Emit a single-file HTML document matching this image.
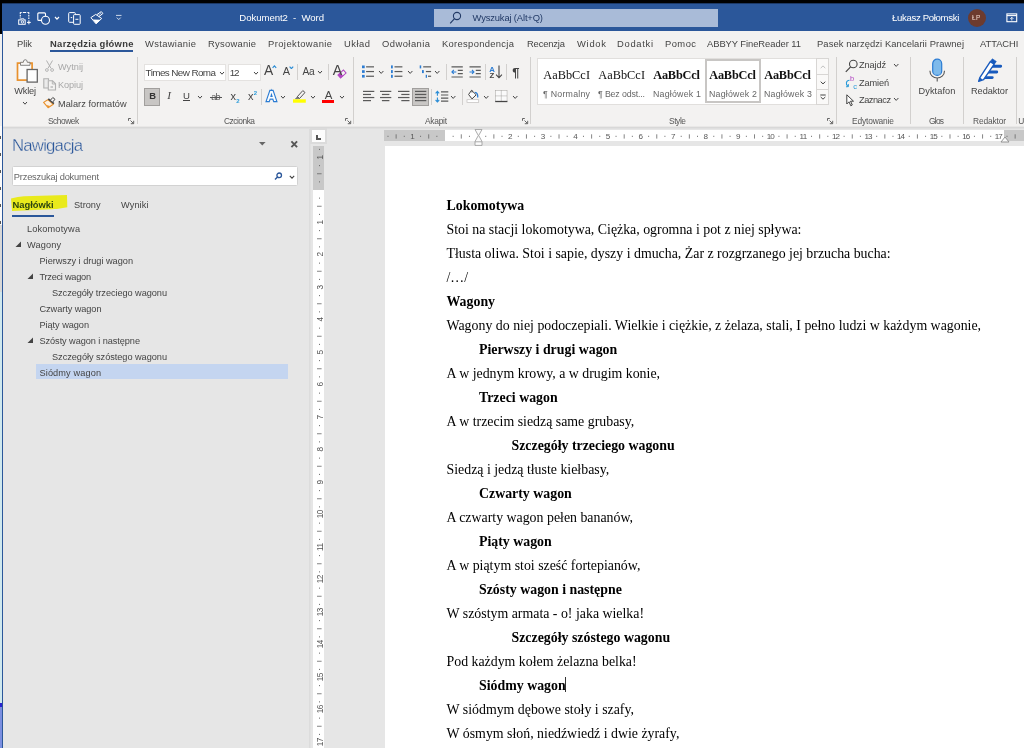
<!DOCTYPE html><html><head><meta charset="utf-8"><title>Dokument2 - Word</title><style>
html,body{margin:0;padding:0}body{width:1024px;height:748px;overflow:hidden;position:relative;background:#e6e6e6;font-family:"Liberation Sans", sans-serif}
#r{position:absolute;left:0;top:0;width:1024px;height:748px;overflow:hidden;will-change:transform;transform:translateZ(0)}
#r div,#r svg,#r span{position:absolute;display:block}
#r span{white-space:pre;line-height:1}
.s{font-family:"Liberation Serif", serif}.b{font-weight:bold}
</style></head><body><div id="r">
<div style="left:0px;top:0px;width:1024px;height:3px;background:#000;"></div>
<div style="left:0px;top:3px;width:2px;height:31px;background:#000;"></div>
<div style="left:0px;top:34px;width:2px;height:92px;background:#f0f0f0;"></div>
<div style="left:0px;top:126px;width:2px;height:99px;background:#fbfbfb;"></div>
<div style="left:0px;top:136px;width:1px;height:3px;background:#555;"></div>
<div style="left:0px;top:153px;width:1px;height:3px;background:#555;"></div>
<div style="left:0px;top:170px;width:1px;height:3px;background:#555;"></div>
<div style="left:0px;top:187px;width:1px;height:3px;background:#555;"></div>
<div style="left:0px;top:204px;width:1px;height:3px;background:#555;"></div>
<div style="left:0px;top:221px;width:1px;height:3px;background:#555;"></div>
<div style="left:0px;top:225px;width:2px;height:67px;background:#d8d8d8;"></div>
<div style="left:0px;top:292px;width:2px;height:411px;background:#cfe8ee;"></div>
<div style="left:0px;top:703px;width:2px;height:4px;background:#2a22d0;"></div>
<div style="left:0px;top:707px;width:2px;height:41px;background:#7b8fe0;"></div>
<div style="left:2px;top:3px;width:1022px;height:28px;background:#2b579a;"></div>
<div style="left:2px;top:3px;width:1022px;height:1px;background:#1c3865;"></div>
<div style="left:2px;top:31px;width:1px;height:717px;background:#2b579a;"></div>
<div style="left:3px;top:31px;width:1021px;height:95.5px;background:#f3f2f1;"></div>
<div style="left:3px;top:126px;width:1021px;height:1px;background:#e9e8e7;"></div>
<div style="left:3px;top:127px;width:1021px;height:1px;background:#d8d8d8;"></div>
<div style="left:3px;top:128px;width:1021px;height:1px;background:#dfdfdf;"></div>
<div style="left:434px;top:9px;width:284px;height:18px;background:#a9bbd8;"></div>
<div style="left:50px;top:50px;width:83px;height:2px;background:#2b579a;"></div>
<div style="left:309px;top:129px;width:1px;height:619px;background:#dcdcdc;"></div>
<div style="left:310px;top:129px;width:1px;height:619px;background:#e1e1e1;"></div>
<div style="left:12px;top:166px;width:286px;height:20px;background:#fff;border:1px solid #d2d2d2;box-sizing:border-box;border-radius:1.5px"></div>
<div style="left:12px;top:215px;width:42.3px;height:2px;background:#2b579a;"></div>
<div style="left:36px;top:364px;width:251.5px;height:15px;background:#c4d5f0;"></div>
<div style="left:385px;top:146px;width:639px;height:602px;background:#fff;"></div>
<div style="left:384px;top:130px;width:61px;height:11px;background:#c8c8c8;"></div>
<div style="left:445px;top:130px;width:559px;height:11px;background:#fff;"></div>
<div style="left:1004px;top:130px;width:20px;height:11px;background:#c8c8c8;"></div>
<div style="left:310px;top:128px;width:17px;height:16px;background:#fcfcfc;border:2px solid #dbdbdb;box-sizing:border-box"></div>
<div style="left:313px;top:146px;width:11px;height:44px;background:#c8c8c8;"></div>
<div style="left:313px;top:190px;width:11px;height:558px;background:#fff;"></div>
<div style="left:137px;top:57px;width:1px;height:67px;background:#d2d0ce;"></div>
<div style="left:353px;top:57px;width:1px;height:67px;background:#d2d0ce;"></div>
<div style="left:530px;top:57px;width:1px;height:67px;background:#d2d0ce;"></div>
<div style="left:836px;top:57px;width:1px;height:67px;background:#d2d0ce;"></div>
<div style="left:910px;top:57px;width:1px;height:67px;background:#d2d0ce;"></div>
<div style="left:963px;top:57px;width:1px;height:67px;background:#d2d0ce;"></div>
<div style="left:1016px;top:57px;width:1px;height:67px;background:#d2d0ce;"></div>
<div style="left:144px;top:63.5px;width:82.3px;height:17px;background:#fff;border:1px solid #e4e2e0;box-sizing:border-box"></div>
<div style="left:227.5px;top:63.5px;width:33px;height:17px;background:#fff;border:1px solid #e4e2e0;box-sizing:border-box"></div>
<div style="left:297px;top:64px;width:1px;height:16px;background:#d2d0ce;"></div>
<div style="left:328px;top:64px;width:1px;height:16px;background:#d2d0ce;"></div>
<div style="left:144px;top:88px;width:16px;height:18px;background:#c8c6c4;border:1px solid #a19f9d;box-sizing:border-box"></div>
<div style="left:183px;top:100px;width:7.3px;height:1px;background:#444;"></div>
<div style="left:209.5px;top:97px;width:12.5px;height:1px;background:#555;"></div>
<div style="left:261px;top:89px;width:1px;height:16px;background:#d2d0ce;"></div>
<div style="left:322px;top:99.5px;width:12.3px;height:3.2px;background:#ff0000;"></div>
<div style="left:446px;top:64px;width:1px;height:16px;background:#d2d0ce;"></div>
<div style="left:485px;top:64px;width:1px;height:16px;background:#d2d0ce;"></div>
<div style="left:506px;top:64px;width:1px;height:16px;background:#d2d0ce;"></div>
<div style="left:412px;top:88px;width:17px;height:18px;background:#c8c6c4;border:1px solid #a19f9d;box-sizing:border-box"></div>
<div style="left:431px;top:89px;width:1px;height:16px;background:#d2d0ce;"></div>
<div style="left:462px;top:89px;width:1px;height:16px;background:#d2d0ce;"></div>
<div style="left:537px;top:58px;width:292px;height:47px;background:#fff;border:1px solid #e1dfdd;box-sizing:border-box"></div>
<div style="left:816px;top:58px;width:13px;height:47px;background:#faf9f8;border:1px solid #d8d6d4;box-sizing:border-box"></div>
<div style="left:816px;top:74px;width:13px;height:1px;background:#d8d6d4;"></div>
<div style="left:816px;top:89px;width:13px;height:1px;background:#d8d6d4;"></div>
<div style="left:705px;top:59px;width:56px;height:44px;background:#fff;border:2px solid #c8c6c4;box-sizing:border-box"></div>
<div style="left:968px;top:8.5px;width:18px;height:18px;background:#6d3b2e;border-radius:50%"></div>
<div style="left:565px;top:677px;width:1px;height:15px;background:#333;"></div>
<svg style="left:259px;top:142px;" width="7" height="4" viewBox="0 0 7 4"><path d="M0 0h6.600L3.300 3.600z" fill="#666"/></svg>
<svg style="left:289.5px;top:139.5px;" width="9" height="9" viewBox="0 0 9 9"><path d="M1.400 1.400l5.700 5.700M7.100 1.400l-5.700 5.700" stroke="#555" stroke-width="1.900" fill="none"/></svg>
<svg style="left:273.5px;top:171.5px;" width="9" height="9" viewBox="0 0 9 9"><circle cx="5.200" cy="3.300" r="2.300" fill="none" stroke="#2b579a" stroke-width="1.300"/><path d="M3.500 5L1 7.500" stroke="#2b579a" stroke-width="1.500"/></svg>
<svg style="left:288.5px;top:174.5px;" width="7" height="5" viewBox="0 0 7 5"><path d="M0.800 0.800L3 3.100L5.200 0.800" fill="none" stroke="#444" stroke-width="1.100"/></svg>
<svg style="left:10px;top:194px;" width="59" height="18" viewBox="0 0 59 18"><path d="M1 4.600Q8 2.600 14 2.200L57 1L57.300 13.300Q50 14.600 42 15.200L2 17z" fill="#e9ea1c"/></svg>
<svg style="left:14.5px;top:240.8px;" width="7" height="7" viewBox="0 0 7 7"><path d="M6 0.5V6H0.5z" fill="#444"/></svg>
<svg style="left:27.0px;top:272.8px;" width="7" height="7" viewBox="0 0 7 7"><path d="M6 0.5V6H0.5z" fill="#444"/></svg>
<svg style="left:27.0px;top:336.8px;" width="7" height="7" viewBox="0 0 7 7"><path d="M6 0.5V6H0.5z" fill="#444"/></svg>
<svg style="left:316px;top:135px;" width="6" height="6" viewBox="0 0 6 6"><path d="M1 0V4H5" fill="none" stroke="#555" stroke-width="2"/></svg>
<svg style="left:15px;top:58px;" width="24" height="26" viewBox="0 0 24 26">
<rect x="2.5" y="5.1" width="14.6" height="17" fill="#fafafa" stroke="#e8912d" stroke-width="1.7"/>
<path d="M5.5 7.3V4.300H8.300A2 2.6 0 0 1 12.300 4.300H15V7.3z" fill="#f6f5f4" stroke="#777" stroke-width="0.9"/>
<rect x="12.100" y="11.500" width="10.200" height="12.600" fill="#fdfdfd" stroke="#666" stroke-width="1.3"/>
</svg>
<svg style="left:21.85px;top:100.7px;" width="6" height="4.2" viewBox="0 0 6 4.2"><path d="M1 1L3.0 3.2L5 1" fill="none" stroke="#444" stroke-width="1"/></svg>
<svg style="left:45px;top:60px;" width="9" height="12.5" viewBox="0 0 9 12.5"><path d="M1.500 0.5L6 8.300M7.5 0.5L3 8.300" stroke="#b0b0b0" stroke-width="1" fill="none"/><circle cx="1.900" cy="10" r="1.400" fill="none" stroke="#b0b0b0" stroke-width="0.9"/><circle cx="7.100" cy="10" r="1.400" fill="none" stroke="#b0b0b0" stroke-width="0.9"/></svg>
<svg style="left:43px;top:78px;" width="14" height="13" viewBox="0 0 14 13"><path d="M5 10H0.800V0.800H5.500V2.500" fill="#ebebeb" stroke="#b0b0b0" stroke-width="1.1"/><path d="M5.300 2.800H9.500L12.500 5.800V12H5.300z" fill="#f3f2f1" stroke="#b0b0b0" stroke-width="1.1"/><path d="M9.300 2.800V6H12.500" fill="none" stroke="#b0b0b0" stroke-width="0.9"/><rect x="7.500" y="8" width="2.500" height="2" fill="#c8c8c8"/></svg>
<svg style="left:43px;top:96px;" width="14" height="13" viewBox="0 0 14 13"><path d="M0.600 6.400L4.800 3.700L10.300 8.300L5.100 11.700z" fill="#fdf1e3" stroke="#e8912d" stroke-width="1.1" stroke-linejoin="round"/><path d="M3.300 9L5.100 11.500L7 9.900z" fill="#e8912d"/><path d="M5.300 2.900L10.900 7.600" stroke="#444" stroke-width="1.500"/><path d="M7.300 4.300L9.800 1.500L12 3.300L9.500 6.200z" fill="#f3f2f1" stroke="#444" stroke-width="1"/></svg>
<svg style="left:128.1px;top:117.8px;" width="7" height="7" viewBox="0 0 7 7"><path d="M0.5 2.800V0.5H2.800M2.500 2.500L5.300 5.300M5.700 2.800V5.700H2.800" fill="none" stroke="#555" stroke-width="0.9"/></svg>
<svg style="left:218.9px;top:70.7px;" width="6" height="4.2" viewBox="0 0 6 4.2"><path d="M1 1L3.0 3.2L5 1" fill="none" stroke="#444" stroke-width="1"/></svg>
<svg style="left:252.75px;top:70.7px;" width="6" height="4.2" viewBox="0 0 6 4.2"><path d="M1 1L3.0 3.2L5 1" fill="none" stroke="#444" stroke-width="1"/></svg>
<svg style="left:271.7px;top:65.3px;" width="5" height="3.5" viewBox="0 0 5 3.5"><path d="M0.6 2.800L2.4 0.900L4.200 2.800" fill="none" stroke="#2b8dd6" stroke-width="1.2"/></svg>
<svg style="left:288.8px;top:65.6px;" width="5" height="3.5" viewBox="0 0 5 3.5"><path d="M0.6 0.700L2.4 2.600L4.200 0.700" fill="none" stroke="#2b8dd6" stroke-width="1.2"/></svg>
<svg style="left:316.8px;top:70.4px;" width="6" height="4.2" viewBox="0 0 6 4.2"><path d="M1 1L3.0 3.2L5 1" fill="none" stroke="#444" stroke-width="1"/></svg>
<svg style="left:337px;top:69px;" width="10" height="10" viewBox="0 0 10 10"><g transform="rotate(-42 5 5)"><rect x="1.300" y="3" width="7.400" height="4" fill="#f3f2f1" stroke="#b146c2" stroke-width="1"/><rect x="1.300" y="3" width="3.400" height="4" fill="#b146c2"/></g></svg>
<svg style="left:197.3px;top:95.30000000000001px;" width="6" height="4.2" viewBox="0 0 6 4.2"><path d="M1 1L3.0 3.2L5 1" fill="none" stroke="#444" stroke-width="1"/></svg>
<svg style="left:280.1px;top:95.2px;" width="6" height="4.2" viewBox="0 0 6 4.2"><path d="M1 1L3.0 3.2L5 1" fill="none" stroke="#444" stroke-width="1"/></svg>
<svg style="left:293px;top:88px;" width="14" height="16" viewBox="0 0 14 16"><path d="M4.300 8.700L9.800 2.600L12 4.500L6.500 10.500z" fill="#f3f2f1" stroke="#444" stroke-width="0.9"/><path d="M4.300 8.700L2.300 11L6.500 10.500z" fill="#6a6a6a" stroke="#6a6a6a" stroke-width="0.5"/><rect x="0" y="11.300" width="12.800" height="3.400" fill="#ffff00"/></svg>
<svg style="left:309.9px;top:95.2px;" width="6" height="4.2" viewBox="0 0 6 4.2"><path d="M1 1L3.0 3.2L5 1" fill="none" stroke="#444" stroke-width="1"/></svg>
<svg style="left:338.5px;top:95.2px;" width="6" height="4.2" viewBox="0 0 6 4.2"><path d="M1 1L3.0 3.2L5 1" fill="none" stroke="#444" stroke-width="1"/></svg>
<svg style="left:344.5px;top:117.8px;" width="7" height="7" viewBox="0 0 7 7"><path d="M0.5 2.800V0.5H2.800M2.500 2.500L5.300 5.300M5.700 2.800V5.700H2.800" fill="none" stroke="#555" stroke-width="0.9"/></svg>
<svg style="left:361px;top:65px;" width="14" height="14" viewBox="0 0 14 14"><rect x="1" y="0.5" width="2.700" height="2.700" fill="#2b7cd3"/><path d="M5.100 1.85h7.900" stroke="#5a5a5a" stroke-width="1.2"/><rect x="1" y="5.2" width="2.700" height="2.700" fill="#2b7cd3"/><path d="M5.100 6.550000000000001h7.900" stroke="#5a5a5a" stroke-width="1.2"/><rect x="1" y="9.9" width="2.700" height="2.700" fill="#2b7cd3"/><path d="M5.100 11.25h7.900" stroke="#5a5a5a" stroke-width="1.2"/></svg>
<svg style="left:378.40000000000003px;top:70.3px;" width="6.4" height="4.4" viewBox="0 0 6.4 4.4"><path d="M1 1L3.2 3.4L5.4 1" fill="none" stroke="#444" stroke-width="1"/></svg>
<svg style="left:390px;top:65px;" width="14" height="14" viewBox="0 0 14 14"><rect x="1" y="0.4" width="1.800" height="3" fill="#2b7cd3"/><path d="M4.500 1.85h7.900" stroke="#5a5a5a" stroke-width="1.2"/><rect x="1" y="5.1000000000000005" width="1.800" height="3" fill="#2b7cd3"/><path d="M4.500 6.550000000000001h7.900" stroke="#5a5a5a" stroke-width="1.2"/><rect x="1" y="9.8" width="1.800" height="3" fill="#2b7cd3"/><path d="M4.500 11.25h7.900" stroke="#5a5a5a" stroke-width="1.2"/></svg>
<svg style="left:407.3px;top:70.3px;" width="6.4" height="4.4" viewBox="0 0 6.4 4.4"><path d="M1 1L3.2 3.4L5.4 1" fill="none" stroke="#444" stroke-width="1"/></svg>
<svg style="left:418px;top:65px;" width="14" height="14" viewBox="0 0 14 14"><rect x="1.700" y="0.400" width="1.500" height="3" fill="#2b7cd3"/><path d="M5.200 1.850h7.900" stroke="#5a5a5a" stroke-width="1.2"/><rect x="4" y="5.100" width="1.800" height="3" fill="#2b7cd3"/><path d="M7.900 6.550h5.200" stroke="#5a5a5a" stroke-width="1.2"/><rect x="7.700" y="9.800" width="1.300" height="3" fill="#2b7cd3"/><path d="M10 11.250h3.100" stroke="#5a5a5a" stroke-width="1.2"/></svg>
<svg style="left:433.90000000000003px;top:70.3px;" width="6.4" height="4.4" viewBox="0 0 6.4 4.4"><path d="M1 1L3.2 3.4L5.4 1" fill="none" stroke="#444" stroke-width="1"/></svg>
<svg style="left:451px;top:65px;" width="13" height="14" viewBox="0 0 13 14"><path d="M0.500 1.900h11.300M6.800 5.300h5M6.800 8.600h5M0.500 12h11.300" stroke="#5a5a5a" stroke-width="1.2"/><path d="M5.300 6.950H0.900M2.800 5L0.900 6.950L2.800 8.900" fill="none" stroke="#2b7cd3" stroke-width="1.1"/></svg>
<svg style="left:468.5px;top:65px;" width="13" height="14" viewBox="0 0 13 14"><path d="M0.500 1.900h11.300M6.800 5.300h5M6.800 8.600h5M0.500 12h11.300" stroke="#5a5a5a" stroke-width="1.2"/><path d="M0.500 6.950H4.900M3 5L4.900 6.950L3 8.900" fill="none" stroke="#2b7cd3" stroke-width="1.1"/></svg>
<svg style="left:495.2px;top:64.5px;" width="8" height="14" viewBox="0 0 8 14"><path d="M4 0.500V12.500M1.100 9.700L4 12.800L6.900 9.700" fill="none" stroke="#444" stroke-width="1.1"/></svg>
<svg style="left:362.5px;top:90px;" width="13" height="14" viewBox="0 0 13 14"><path d="M0 1.4h11.3" stroke="#5a5a5a" stroke-width="1.2"/><path d="M0 4.47h8" stroke="#5a5a5a" stroke-width="1.2"/><path d="M0 7.539999999999999h11.3" stroke="#5a5a5a" stroke-width="1.2"/><path d="M0 10.61h8" stroke="#5a5a5a" stroke-width="1.2"/></svg>
<svg style="left:379.8px;top:90px;" width="13" height="14" viewBox="0 0 13 14"><path d="M0 1.4h11.3" stroke="#5a5a5a" stroke-width="1.2"/><path d="M1.9 4.47h7.5" stroke="#5a5a5a" stroke-width="1.2"/><path d="M0 7.539999999999999h11.3" stroke="#5a5a5a" stroke-width="1.2"/><path d="M1.9 10.61h7.5" stroke="#5a5a5a" stroke-width="1.2"/></svg>
<svg style="left:397.5px;top:90px;" width="13" height="14" viewBox="0 0 13 14"><path d="M0 1.4h11.5" stroke="#5a5a5a" stroke-width="1.2"/><path d="M3.3 4.47h8.2" stroke="#5a5a5a" stroke-width="1.2"/><path d="M0 7.539999999999999h11.5" stroke="#5a5a5a" stroke-width="1.2"/><path d="M3.3 10.61h8.2" stroke="#5a5a5a" stroke-width="1.2"/></svg>
<svg style="left:415px;top:90px;" width="13" height="14" viewBox="0 0 13 14"><path d="M0 1.4h11.3" stroke="#5a5a5a" stroke-width="1.2"/><path d="M0 4.47h11.3" stroke="#5a5a5a" stroke-width="1.2"/><path d="M0 7.539999999999999h11.3" stroke="#5a5a5a" stroke-width="1.2"/><path d="M0 10.61h11.3" stroke="#5a5a5a" stroke-width="1.2"/></svg>
<svg style="left:435px;top:89.5px;" width="14" height="14" viewBox="0 0 14 14"><path d="M6 1.900h7.300M6 5h7.300M6 8.100h7.300M6 11.200h7.300" stroke="#5a5a5a" stroke-width="1.2"/><path d="M2.400 1.500V5.800M0.600 3.300L2.400 1.400L4.200 3.300M2.400 7.500V11.800M0.600 10L2.400 11.900L4.200 10" fill="none" stroke="#2b8dd6" stroke-width="1.1"/></svg>
<svg style="left:449.8px;top:95.1px;" width="6.4" height="4.4" viewBox="0 0 6.4 4.4"><path d="M1 1L3.2 3.4L5.4 1" fill="none" stroke="#444" stroke-width="1"/></svg>
<svg style="left:466px;top:89px;" width="14" height="15" viewBox="0 0 14 15"><path d="M5.500 1.300L10.200 5.800L6 9.900L2.600 5.500z" fill="#fdfdfd" stroke="#444" stroke-width="1" stroke-linejoin="round"/><path d="M6 1.200V3.500" stroke="#444" stroke-width="0.900"/><path d="M8.800 3.300C11.300 3.400 12 5.800 11.700 8.500" fill="none" stroke="#2b7cd3" stroke-width="1.300"/><rect x="1" y="10.700" width="11.700" height="2.900" fill="#fff" stroke="#c0beBC" stroke-width="0.7"/></svg>
<svg style="left:483.2px;top:95.1px;" width="6.4" height="4.4" viewBox="0 0 6.4 4.4"><path d="M1 1L3.2 3.4L5.4 1" fill="none" stroke="#444" stroke-width="1"/></svg>
<svg style="left:495px;top:90px;" width="13" height="13" viewBox="0 0 13 13"><rect x="0.500" y="0.500" width="11.600" height="10.800" fill="#fafafa"/><path d="M0.500 0.500h11.600M0.500 5.900h11.600M0.500 0.500v10.800M6.300 0.500v10.800M12.100 0.500v10.800" stroke="#9a9896" stroke-width="0.9" stroke-dasharray="1 1"/><path d="M0.200 11.500h12.200" stroke="#444" stroke-width="1.300"/></svg>
<svg style="left:511.9px;top:95.1px;" width="6.4" height="4.4" viewBox="0 0 6.4 4.4"><path d="M1 1L3.2 3.4L5.4 1" fill="none" stroke="#444" stroke-width="1"/></svg>
<svg style="left:521.7px;top:117.8px;" width="7" height="7" viewBox="0 0 7 7"><path d="M0.5 2.800V0.5H2.800M2.500 2.500L5.300 5.300M5.700 2.800V5.700H2.800" fill="none" stroke="#555" stroke-width="0.9"/></svg>
<svg style="left:819.5px;top:64.5px;" width="6" height="4" viewBox="0 0 6 4"><path d="M0.700 3.100L3 0.900L5.300 3.100" fill="none" stroke="#c0c0c0" stroke-width="1"/></svg>
<svg style="left:819.5px;top:80.5px;" width="6" height="4" viewBox="0 0 6 4"><path d="M0.700 0.700L3 2.900L5.300 0.700" fill="none" stroke="#444" stroke-width="1"/></svg>
<svg style="left:819.5px;top:93.5px;" width="6" height="7" viewBox="0 0 6 7"><path d="M0.300 1h5.400" stroke="#444" stroke-width="1"/><path d="M0.700 3L3 5.200L5.300 3" fill="none" stroke="#444" stroke-width="1"/></svg>
<svg style="left:827.2px;top:117.8px;" width="7" height="7" viewBox="0 0 7 7"><path d="M0.5 2.800V0.5H2.800M2.500 2.500L5.300 5.300M5.700 2.800V5.700H2.800" fill="none" stroke="#555" stroke-width="0.9"/></svg>
<svg style="left:844.5px;top:58.5px;" width="14" height="14" viewBox="0 0 14 14"><circle cx="8.300" cy="5" r="3.800" fill="none" stroke="#444" stroke-width="1.100"/><path d="M5.600 7.800L0.800 12.800" stroke="#444" stroke-width="1.200"/></svg>
<svg style="left:892.8px;top:62.8px;" width="6.4" height="4.4" viewBox="0 0 6.4 4.4"><path d="M1 1L3.2 3.4L5.4 1" fill="none" stroke="#444" stroke-width="1"/></svg>
<svg style="left:844.5px;top:78.5px;" width="8" height="10" viewBox="0 0 8 10"><path d="M4.500 1.200C1 1.200 0.300 5.500 3 7.200" fill="none" stroke="#2b9bd9" stroke-width="1.100"/><path d="M1 7.800L3.500 7.600L3.200 5" fill="none" stroke="#2b9bd9" stroke-width="1"/></svg>
<svg style="left:846px;top:93.5px;" width="9" height="13" viewBox="0 0 9 13"><path d="M0.800 0.800V10L3 7.800L4.800 11.800L6.300 11L4.500 7.200H7.500z" fill="#fff" stroke="#444" stroke-width="1"/></svg>
<svg style="left:893.3px;top:97.39999999999999px;" width="6.4" height="4.4" viewBox="0 0 6.4 4.4"><path d="M1 1L3.2 3.4L5.4 1" fill="none" stroke="#444" stroke-width="1"/></svg>
<svg style="left:928px;top:58px;" width="18" height="26" viewBox="0 0 18 26"><rect x="4.700" y="1.200" width="9" height="16.200" rx="4.500" fill="#7ebaeb" stroke="#2b7cd3" stroke-width="1.200"/><path d="M1.900 12.800C1.900 22.300 16.500 22.300 16.500 12.800M9.200 19.800v3.800" fill="none" stroke="#555" stroke-width="1.100"/></svg>
<svg style="left:977px;top:57px;" width="27" height="26" viewBox="0 0 27 26"><path d="M14 9.250h9.700M11 15h8.800M8 20.600h7.300" stroke="#185abd" stroke-width="2.800" stroke-linecap="round"/><path d="M1.700 24.300L3 20.300L13.300 4.600L17.200 7.200L6.600 22.700z" fill="#fff" stroke="#185abd" stroke-width="1.400" stroke-linejoin="round"/><path d="M1.700 24.300L2.900 20.600L5.600 22.500z" fill="#185abd"/><path d="M13.600 4.200L15.300 1.800L19.300 4.400L17.600 6.900z" fill="#185abd" stroke="#185abd" stroke-width="0.600" stroke-linejoin="round"/></svg>
<svg style="left:17px;top:11px;" width="15" height="15" viewBox="0 0 15 15"><path d="M3.300 1.200V7.500" fill="none" stroke="#fff" stroke-width="1.100" stroke-dasharray="1.700 0.900"/><path d="M3.300 1.500H4.700M5.800 1.500H9.200M10.400 1.500H11.800" stroke="#fff" stroke-width="1.100"/><path d="M11.800 1.200V9.200" fill="none" stroke="#fff" stroke-width="1.100" stroke-dasharray="1.700 0.900"/><rect x="1.700" y="8.900" width="6.500" height="4.400" fill="#2b579a" stroke="#fff" stroke-width="1"/><path d="M4.200 8.600V7.800H6.900V8.600" fill="#2b579a" stroke="#fff" stroke-width="0.900"/><circle cx="5.400" cy="11" r="1.200" fill="none" stroke="#fff" stroke-width="0.900"/><path d="M10 11.400h3.800M11.900 9.500v3.800" stroke="#fff" stroke-width="1"/></svg>
<svg style="left:36px;top:11px;" width="15" height="15" viewBox="0 0 15 15"><path d="M6 9.400H2.800a1 1 0 0 1-1-1V2.900a1 1 0 0 1 1-1H8.500a1 1 0 0 1 1 1V5.500" fill="none" stroke="#fff" stroke-width="1.100"/><circle cx="9.500" cy="9.300" r="4" fill="#2b579a" stroke="#fff" stroke-width="1.100"/></svg>
<svg style="left:54.1px;top:15.55px;" width="6" height="4.1" viewBox="0 0 6 4.1"><path d="M1 1L3.0 3.1L5 1" fill="none" stroke="#fff" stroke-width="1.2"/></svg>
<svg style="left:67px;top:11px;" width="15" height="15" viewBox="0 0 15 15"><rect x="1.700" y="1.600" width="6.600" height="9.700" rx="0.800" fill="none" stroke="#fff" stroke-width="1"/><rect x="6.600" y="3.600" width="6.600" height="9.700" rx="0.800" fill="#2b579a" stroke="#fff" stroke-width="1"/><path d="M3.700 6.600h1.500M8.400 8.300h3" stroke="#fff" stroke-width="1"/></svg>
<svg style="left:90px;top:11px;" width="15" height="14" viewBox="0 0 15 14"><path d="M0.900 6.600L5.750 3.400L11.700 7.500L6 12.800z" fill="none" stroke="#fff" stroke-width="1" stroke-linejoin="round"/><path d="M2.800 8.500L10.400 8.700L6 12.800z" fill="#fff"/><path d="M6.800 3.700L11.300 0.600L12.900 2.500L8.800 5.700" fill="none" stroke="#fff" stroke-width="1"/><path d="M8.500 2.800L10 4.600M10 1.700L11.500 3.500" stroke="#fff" stroke-width="0.600"/></svg>
<svg style="left:115px;top:14px;" width="8" height="8" viewBox="0 0 8 8"><path d="M1 1.400h5.500" stroke="#fff" stroke-width="0.900" opacity="0.85"/><path d="M1.800 3.600L3.750 5.600L5.700 3.600" fill="none" stroke="#fff" stroke-width="0.900" opacity="0.85"/></svg>
<svg style="left:449px;top:11px;" width="14" height="14" viewBox="0 0 14 14"><circle cx="8" cy="5" r="3.600" fill="none" stroke="#223a66" stroke-width="1.100"/><path d="M5.500 7.700L1.200 12.300" stroke="#223a66" stroke-width="1.200"/></svg>
<svg style="left:1006px;top:12.5px;" width="12" height="10" viewBox="0 0 12 10"><rect x="0.900" y="0.900" width="9.800" height="7.800" fill="none" stroke="#fff" stroke-width="1.100"/><path d="M0.900 2.600h9.800" stroke="#fff" stroke-width="1.100"/><path d="M5.800 7.500V4.500M4.300 5.800L5.800 4.300L7.300 5.800" fill="none" stroke="#fff" stroke-width="0.900"/></svg>
<svg style="left:0px;top:0px;" width="1024" height="145" viewBox="0 0 1024 145"><rect x="387.49" y="135.800" width="1" height="1" fill="#666"/><path d="M396.13 134.300v4.300" stroke="#666" stroke-width="0.800"/><rect x="403.77" y="135.800" width="1" height="1" fill="#666"/><rect x="420.06" y="135.800" width="1" height="1" fill="#666"/><path d="M428.71 134.300v4.300" stroke="#666" stroke-width="0.800"/><rect x="436.36" y="135.800" width="1" height="1" fill="#666"/><rect x="452.64" y="135.800" width="1" height="1" fill="#666"/><path d="M461.29 134.300v4.300" stroke="#666" stroke-width="0.800"/><rect x="468.94" y="135.800" width="1" height="1" fill="#666"/><rect x="485.23" y="135.800" width="1" height="1" fill="#666"/><path d="M493.87 134.300v4.300" stroke="#666" stroke-width="0.800"/><rect x="501.51" y="135.800" width="1" height="1" fill="#666"/><rect x="517.80" y="135.800" width="1" height="1" fill="#666"/><path d="M526.45 134.300v4.300" stroke="#666" stroke-width="0.800"/><rect x="534.10" y="135.800" width="1" height="1" fill="#666"/><rect x="550.38" y="135.800" width="1" height="1" fill="#666"/><path d="M559.03 134.300v4.300" stroke="#666" stroke-width="0.800"/><rect x="566.67" y="135.800" width="1" height="1" fill="#666"/><rect x="582.97" y="135.800" width="1" height="1" fill="#666"/><path d="M591.61 134.300v4.300" stroke="#666" stroke-width="0.800"/><rect x="599.25" y="135.800" width="1" height="1" fill="#666"/><rect x="615.54" y="135.800" width="1" height="1" fill="#666"/><path d="M624.19 134.300v4.300" stroke="#666" stroke-width="0.800"/><rect x="631.84" y="135.800" width="1" height="1" fill="#666"/><rect x="648.12" y="135.800" width="1" height="1" fill="#666"/><path d="M656.77 134.300v4.300" stroke="#666" stroke-width="0.800"/><rect x="664.41" y="135.800" width="1" height="1" fill="#666"/><rect x="680.70" y="135.800" width="1" height="1" fill="#666"/><path d="M689.35 134.300v4.300" stroke="#666" stroke-width="0.800"/><rect x="697.00" y="135.800" width="1" height="1" fill="#666"/><rect x="713.28" y="135.800" width="1" height="1" fill="#666"/><path d="M721.93 134.300v4.300" stroke="#666" stroke-width="0.800"/><rect x="729.58" y="135.800" width="1" height="1" fill="#666"/><rect x="745.87" y="135.800" width="1" height="1" fill="#666"/><path d="M754.51 134.300v4.300" stroke="#666" stroke-width="0.800"/><rect x="762.15" y="135.800" width="1" height="1" fill="#666"/><rect x="778.44" y="135.800" width="1" height="1" fill="#666"/><path d="M787.09 134.300v4.300" stroke="#666" stroke-width="0.800"/><rect x="794.73" y="135.800" width="1" height="1" fill="#666"/><rect x="811.02" y="135.800" width="1" height="1" fill="#666"/><path d="M819.67 134.300v4.300" stroke="#666" stroke-width="0.800"/><rect x="827.32" y="135.800" width="1" height="1" fill="#666"/><rect x="843.61" y="135.800" width="1" height="1" fill="#666"/><path d="M852.25 134.300v4.300" stroke="#666" stroke-width="0.800"/><rect x="859.89" y="135.800" width="1" height="1" fill="#666"/><rect x="876.18" y="135.800" width="1" height="1" fill="#666"/><path d="M884.83 134.300v4.300" stroke="#666" stroke-width="0.800"/><rect x="892.47" y="135.800" width="1" height="1" fill="#666"/><rect x="908.76" y="135.800" width="1" height="1" fill="#666"/><path d="M917.41 134.300v4.300" stroke="#666" stroke-width="0.800"/><rect x="925.05" y="135.800" width="1" height="1" fill="#666"/><rect x="941.35" y="135.800" width="1" height="1" fill="#666"/><path d="M949.99 134.300v4.300" stroke="#666" stroke-width="0.800"/><rect x="957.63" y="135.800" width="1" height="1" fill="#666"/><rect x="973.92" y="135.800" width="1" height="1" fill="#666"/><path d="M982.57 134.300v4.300" stroke="#666" stroke-width="0.800"/><rect x="990.21" y="135.800" width="1" height="1" fill="#666"/><rect x="1006.50" y="135.800" width="1" height="1" fill="#666"/><path d="M1015.15 134.300v4.300" stroke="#666" stroke-width="0.800"/></svg>
<svg style="left:474px;top:128.5px;" width="9" height="17" viewBox="0 0 9 17"><path d="M1 0.500H8L4.700 6.500L8 12.500V16.400H1V12.500L4.300 6.500z" fill="#fbfbfb" stroke="#979797" stroke-width="0.800"/><path d="M1 12.800h7" stroke="#979797" stroke-width="0.800"/></svg>
<svg style="left:999.5px;top:136px;" width="10" height="7" viewBox="0 0 10 7"><path d="M1 6L5 1L9 6z" fill="#fafafa" stroke="#8a8a8a" stroke-width="0.900"/></svg>
<svg style="left:0px;top:0px;" width="330" height="748" viewBox="0 0 330 748"><rect x="319" y="148.88" width="1" height="1" fill="#666"/><rect x="319" y="165.12" width="1" height="1" fill="#666"/><path d="M317 173.75h4.600" stroke="#666" stroke-width="0.800"/><rect x="319" y="181.38" width="1" height="1" fill="#666"/><rect x="319" y="197.62" width="1" height="1" fill="#666"/><path d="M317 206.25h4.600" stroke="#666" stroke-width="0.800"/><rect x="319" y="213.88" width="1" height="1" fill="#666"/><rect x="319" y="230.12" width="1" height="1" fill="#666"/><path d="M317 238.75h4.600" stroke="#666" stroke-width="0.800"/><rect x="319" y="246.38" width="1" height="1" fill="#666"/><rect x="319" y="262.62" width="1" height="1" fill="#666"/><path d="M317 271.25h4.600" stroke="#666" stroke-width="0.800"/><rect x="319" y="278.88" width="1" height="1" fill="#666"/><rect x="319" y="295.12" width="1" height="1" fill="#666"/><path d="M317 303.75h4.600" stroke="#666" stroke-width="0.800"/><rect x="319" y="311.38" width="1" height="1" fill="#666"/><rect x="319" y="327.62" width="1" height="1" fill="#666"/><path d="M317 336.25h4.600" stroke="#666" stroke-width="0.800"/><rect x="319" y="343.88" width="1" height="1" fill="#666"/><rect x="319" y="360.12" width="1" height="1" fill="#666"/><path d="M317 368.75h4.600" stroke="#666" stroke-width="0.800"/><rect x="319" y="376.38" width="1" height="1" fill="#666"/><rect x="319" y="392.62" width="1" height="1" fill="#666"/><path d="M317 401.25h4.600" stroke="#666" stroke-width="0.800"/><rect x="319" y="408.88" width="1" height="1" fill="#666"/><rect x="319" y="425.12" width="1" height="1" fill="#666"/><path d="M317 433.75h4.600" stroke="#666" stroke-width="0.800"/><rect x="319" y="441.38" width="1" height="1" fill="#666"/><rect x="319" y="457.62" width="1" height="1" fill="#666"/><path d="M317 466.25h4.600" stroke="#666" stroke-width="0.800"/><rect x="319" y="473.88" width="1" height="1" fill="#666"/><rect x="319" y="490.12" width="1" height="1" fill="#666"/><path d="M317 498.75h4.600" stroke="#666" stroke-width="0.800"/><rect x="319" y="506.38" width="1" height="1" fill="#666"/><rect x="319" y="522.62" width="1" height="1" fill="#666"/><path d="M317 531.25h4.600" stroke="#666" stroke-width="0.800"/><rect x="319" y="538.88" width="1" height="1" fill="#666"/><rect x="319" y="555.12" width="1" height="1" fill="#666"/><path d="M317 563.75h4.600" stroke="#666" stroke-width="0.800"/><rect x="319" y="571.38" width="1" height="1" fill="#666"/><rect x="319" y="587.62" width="1" height="1" fill="#666"/><path d="M317 596.25h4.600" stroke="#666" stroke-width="0.800"/><rect x="319" y="603.88" width="1" height="1" fill="#666"/><rect x="319" y="620.12" width="1" height="1" fill="#666"/><path d="M317 628.75h4.600" stroke="#666" stroke-width="0.800"/><rect x="319" y="636.38" width="1" height="1" fill="#666"/><rect x="319" y="652.62" width="1" height="1" fill="#666"/><path d="M317 661.25h4.600" stroke="#666" stroke-width="0.800"/><rect x="319" y="668.88" width="1" height="1" fill="#666"/><rect x="319" y="685.12" width="1" height="1" fill="#666"/><path d="M317 693.75h4.600" stroke="#666" stroke-width="0.800"/><rect x="319" y="701.38" width="1" height="1" fill="#666"/><rect x="319" y="717.62" width="1" height="1" fill="#666"/><path d="M317 726.25h4.600" stroke="#666" stroke-width="0.800"/><rect x="319" y="733.88" width="1" height="1" fill="#666"/></svg>
<span style="left:239.30px;top:13.00px;font-size:9.6px;color:#fff;letter-spacing:-0.057px;">Dokument2  -  Word</span>
<span style="left:472.50px;top:13.00px;font-size:9.4px;color:#223a66;letter-spacing:-0.140px;">Wyszukaj (Alt+Q)</span>
<span style="left:892.00px;top:13.00px;font-size:9.6px;color:#fff;letter-spacing:-0.335px;">Łukasz Połomski</span>
<span style="left:17.00px;top:39.00px;font-size:9.4px;color:#444444;letter-spacing:-0.036px;">Plik</span>
<span style="left:145.00px;top:39.00px;font-size:9.4px;color:#444444;letter-spacing:0.340px;">Wstawianie</span>
<span style="left:208.00px;top:39.00px;font-size:9.4px;color:#444444;letter-spacing:0.268px;">Rysowanie</span>
<span style="left:268.00px;top:39.00px;font-size:9.4px;color:#444444;letter-spacing:0.426px;">Projektowanie</span>
<span style="left:344.00px;top:39.00px;font-size:9.4px;color:#444444;letter-spacing:0.508px;">Układ</span>
<span style="left:382.00px;top:39.00px;font-size:9.4px;color:#444444;letter-spacing:0.461px;">Odwołania</span>
<span style="left:442.00px;top:39.00px;font-size:9.4px;color:#444444;letter-spacing:0.326px;">Korespondencja</span>
<span style="left:527.00px;top:39.00px;font-size:9.4px;color:#444444;letter-spacing:-0.156px;">Recenzja</span>
<span style="left:577.00px;top:39.00px;font-size:9.4px;color:#444444;letter-spacing:0.738px;">Widok</span>
<span style="left:617.00px;top:39.00px;font-size:9.4px;color:#444444;letter-spacing:0.701px;">Dodatki</span>
<span style="left:665.00px;top:39.00px;font-size:9.4px;color:#444444;letter-spacing:0.453px;">Pomoc</span>
<span style="left:707.00px;top:39.00px;font-size:9.4px;color:#444444;letter-spacing:-0.057px;">ABBYY FineReader 11</span>
<span style="left:817.00px;top:39.00px;font-size:9.4px;color:#444444;letter-spacing:0.083px;">Pasek narzędzi Kancelarii Prawnej</span>
<span style="left:980.00px;top:39.00px;font-size:9.4px;color:#444444;letter-spacing:-0.053px;">ATTACHI</span>
<span class="b" style="left:50.00px;top:39.00px;font-size:9.4px;color:#3a3a3a;letter-spacing:0.322px;">Narzędzia główne</span>
<span style="left:12.00px;top:138.00px;font-size:16.8px;color:#2b579a;letter-spacing:-0.803px;-webkit-text-stroke:0.3px #e6e6e6;">Nawigacja</span>
<span style="left:13.80px;top:173.00px;font-size:9.3px;color:#666;letter-spacing:-0.199px;">Przeszukaj dokument</span>
<span class="b" style="left:12.60px;top:200.00px;font-size:9.4px;color:#2c4410;letter-spacing:-0.022px;">Nagłówki</span>
<span style="left:74.00px;top:201.00px;font-size:9.2px;color:#444444;letter-spacing:-0.013px;">Strony</span>
<span style="left:121.00px;top:201.00px;font-size:9.2px;color:#444444;letter-spacing:0.103px;">Wyniki</span>
<span style="left:27.00px;top:225.00px;font-size:9.2px;color:#444444;letter-spacing:0.158px;">Lokomotywa</span>
<span style="left:27.00px;top:241.00px;font-size:9.2px;color:#444444;letter-spacing:0.125px;">Wagony</span>
<span style="left:39.50px;top:257.00px;font-size:9.2px;color:#444444;letter-spacing:-0.022px;">Pierwszy i drugi wagon</span>
<span style="left:39.50px;top:273.00px;font-size:9.2px;color:#444444;letter-spacing:-0.254px;">Trzeci wagon</span>
<span style="left:52.00px;top:289.00px;font-size:9.2px;color:#444444;letter-spacing:-0.058px;">Szczegóły trzeciego wagonu</span>
<span style="left:39.50px;top:305.00px;font-size:9.2px;color:#444444;letter-spacing:-0.068px;">Czwarty wagon</span>
<span style="left:39.50px;top:321.00px;font-size:9.2px;color:#444444;letter-spacing:-0.056px;">Piąty wagon</span>
<span style="left:39.50px;top:337.00px;font-size:9.2px;color:#444444;letter-spacing:-0.075px;">Szósty wagon i następne</span>
<span style="left:52.00px;top:353.00px;font-size:9.2px;color:#444444;letter-spacing:-0.039px;">Szczegóły szóstego wagonu</span>
<span style="left:39.50px;top:369.00px;font-size:9.2px;color:#444444;letter-spacing:0.112px;">Siódmy wagon</span>
<span class="s b" style="left:446.50px;top:199.00px;font-size:13.87px;color:#000;">Lokomotywa</span>
<span class="s" style="left:446.50px;top:223.00px;font-size:13.87px;color:#000;">Stoi na stacji lokomotywa, Ciężka, ogromna i pot z niej spływa:</span>
<span class="s" style="left:446.50px;top:247.00px;font-size:13.87px;color:#000;">Tłusta oliwa. Stoi i sapie, dyszy i dmucha, Żar z rozgrzanego jej brzucha bucha:</span>
<span class="s" style="left:446.50px;top:271.00px;font-size:13.87px;color:#000;">/…/</span>
<span class="s b" style="left:446.50px;top:295.00px;font-size:13.87px;color:#000;">Wagony</span>
<span class="s" style="left:446.50px;top:319.00px;font-size:13.87px;color:#000;">Wagony do niej podoczepiali. Wielkie i ciężkie, z żelaza, stali, I pełno ludzi w każdym wagonie,</span>
<span class="s b" style="left:479.00px;top:343.00px;font-size:13.87px;color:#000;">Pierwszy i drugi wagon</span>
<span class="s" style="left:446.50px;top:367.00px;font-size:13.87px;color:#000;">A w jednym krowy, a w drugim konie,</span>
<span class="s b" style="left:479.00px;top:391.00px;font-size:13.87px;color:#000;">Trzeci wagon</span>
<span class="s" style="left:446.50px;top:415.00px;font-size:13.87px;color:#000;">A w trzecim siedzą same grubasy,</span>
<span class="s b" style="left:511.50px;top:439.00px;font-size:13.87px;color:#000;">Szczegóły trzeciego wagonu</span>
<span class="s" style="left:446.50px;top:463.00px;font-size:13.87px;color:#000;">Siedzą i jedzą tłuste kiełbasy,</span>
<span class="s b" style="left:479.00px;top:487.00px;font-size:13.87px;color:#000;">Czwarty wagon</span>
<span class="s" style="left:446.50px;top:511.00px;font-size:13.87px;color:#000;">A czwarty wagon pełen bananów,</span>
<span class="s b" style="left:479.00px;top:535.00px;font-size:13.87px;color:#000;">Piąty wagon</span>
<span class="s" style="left:446.50px;top:559.00px;font-size:13.87px;color:#000;">A w piątym stoi sześć fortepianów,</span>
<span class="s b" style="left:479.00px;top:583.00px;font-size:13.87px;color:#000;">Szósty wagon i następne</span>
<span class="s" style="left:446.50px;top:607.00px;font-size:13.87px;color:#000;">W szóstym armata - o! jaka wielka!</span>
<span class="s b" style="left:511.50px;top:631.00px;font-size:13.87px;color:#000;">Szczegóły szóstego wagonu</span>
<span class="s" style="left:446.50px;top:655.00px;font-size:13.87px;color:#000;">Pod każdym kołem żelazna belka!</span>
<span class="s b" style="left:479.00px;top:679.00px;font-size:13.87px;color:#000;">Siódmy wagon</span>
<span class="s" style="left:446.50px;top:703.00px;font-size:13.87px;color:#000;">W siódmym dębowe stoły i szafy,</span>
<span class="s" style="left:446.50px;top:727.00px;font-size:13.87px;color:#000;">W ósmym słoń, niedźwiedź i dwie żyrafy,</span>
<span style="left:14.30px;top:87.00px;font-size:9.2px;color:#444444;letter-spacing:-0.167px;">Wklej</span>
<span style="left:58.00px;top:63.00px;font-size:9.2px;color:#a8a8a8;letter-spacing:0.013px;">Wytnij</span>
<span style="left:58.00px;top:81.00px;font-size:9.2px;color:#a8a8a8;letter-spacing:-0.109px;">Kopiuj</span>
<span style="left:58.00px;top:100.00px;font-size:9.2px;color:#444444;letter-spacing:0.050px;">Malarz formatów</span>
<span style="left:48.00px;top:117.00px;font-size:8.4px;color:#555;letter-spacing:-0.464px;">Schowek</span>
<span style="left:145.60px;top:68.00px;font-size:9.9px;color:#444444;letter-spacing:-0.593px;">Times New Roma</span>
<span style="left:229.70px;top:68.00px;font-size:9.9px;color:#444444;letter-spacing:-1.284px;">12</span>
<span style="left:263.90px;top:64.00px;font-size:13.8px;color:#444444;">A</span>
<span style="left:282.70px;top:66.00px;font-size:10.9px;color:#444444;">A</span>
<span style="left:302.40px;top:67.00px;font-size:10.2px;color:#444444;letter-spacing:-0.269px;">Aa</span>
<span style="left:332.70px;top:63.00px;font-size:14.2px;color:#444444;">A</span>
<span class="b" style="left:149.20px;top:91.00px;font-size:9.4px;color:#333;">B</span>
<span class="s" style="left:167.30px;top:90.00px;font-size:11.2px;color:#444444;font-style:italic;">I</span>
<span style="left:183.10px;top:91.00px;font-size:9.6px;color:#444444;">U</span>
<span style="left:211.30px;top:93.00px;font-size:9.2px;color:#555;letter-spacing:-0.934px;">ab</span>
<span style="left:230.50px;top:91.00px;font-size:11px;color:#444444;">x</span>
<span class="b" style="left:236.30px;top:98.00px;font-size:6px;color:#2b9bd9;">2</span>
<span style="left:248.00px;top:91.00px;font-size:11px;color:#444444;">x</span>
<span class="b" style="left:253.80px;top:90.00px;font-size:6px;color:#2b9bd9;">2</span>
<span class="b" style="left:266.60px;top:90.00px;font-size:13.8px;color:#fdfeff;-webkit-text-stroke:2.300px #2b7cd3;paint-order:stroke fill;">A</span>
<span style="left:324.70px;top:90.00px;font-size:11.4px;color:#444444;">A</span>
<span style="left:224.00px;top:117.00px;font-size:8.4px;color:#555;letter-spacing:-0.493px;">Czcionka</span>
<span class="b" style="left:489.20px;top:66.00px;font-size:7.8px;color:#2b7cd3;">A</span>
<span class="b" style="left:489.40px;top:72.00px;font-size:7.8px;color:#444;">Z</span>
<span class="b" style="left:512.30px;top:66.00px;font-size:13px;color:#444;">¶</span>
<span style="left:425.00px;top:117.00px;font-size:8.4px;color:#555;letter-spacing:-0.256px;">Akapit</span>
<span class="s" style="left:543.20px;top:69.00px;font-size:12.3px;color:#111;letter-spacing:0.058px;">AaBbCcI</span>
<span style="left:543.00px;top:90.00px;font-size:8.8px;color:#666;letter-spacing:0.243px;">¶ Normalny</span>
<span class="s" style="left:598.20px;top:69.00px;font-size:12.3px;color:#111;letter-spacing:0.058px;">AaBbCcI</span>
<span style="left:598.00px;top:90.00px;font-size:8.8px;color:#666;letter-spacing:-0.145px;">¶ Bez odst...</span>
<span class="s b" style="left:653.20px;top:69.00px;font-size:12.3px;color:#111;letter-spacing:-0.171px;">AaBbCcl</span>
<span style="left:653.00px;top:90.00px;font-size:8.8px;color:#666;letter-spacing:0.226px;">Nagłówek 1</span>
<span class="s b" style="left:709.20px;top:69.00px;font-size:12.3px;color:#111;letter-spacing:-0.171px;">AaBbCcl</span>
<span style="left:709.00px;top:90.00px;font-size:8.8px;color:#666;letter-spacing:0.226px;">Nagłówek 2</span>
<span class="s b" style="left:764.20px;top:69.00px;font-size:12.3px;color:#111;letter-spacing:-0.171px;">AaBbCcl</span>
<span style="left:764.00px;top:90.00px;font-size:8.8px;color:#666;letter-spacing:0.226px;">Nagłówek 3</span>
<span style="left:669.00px;top:117.00px;font-size:8.4px;color:#555;letter-spacing:-0.406px;">Style</span>
<span style="left:859.00px;top:61.00px;font-size:9.2px;color:#444444;letter-spacing:-0.116px;">Znajdź</span>
<span style="left:850.00px;top:75.00px;font-size:7.5px;color:#b146c2;">b</span>
<span style="left:853.30px;top:83.00px;font-size:7.5px;color:#2b9bd9;">c</span>
<span style="left:859.00px;top:79.00px;font-size:9.2px;color:#444444;letter-spacing:-0.128px;">Zamień</span>
<span style="left:859.00px;top:96.00px;font-size:9.2px;color:#444444;letter-spacing:-0.456px;">Zaznacz</span>
<span style="left:852.00px;top:117.00px;font-size:8.4px;color:#555;letter-spacing:-0.146px;">Edytowanie</span>
<span style="left:918.60px;top:87.00px;font-size:9.2px;color:#444444;letter-spacing:0.062px;">Dyktafon</span>
<span style="left:929.00px;top:117.00px;font-size:8.4px;color:#555;letter-spacing:-0.745px;">Głos</span>
<span style="left:971.00px;top:87.00px;font-size:9.2px;color:#444444;letter-spacing:-0.040px;">Redaktor</span>
<span style="left:973.00px;top:117.00px;font-size:8.4px;color:#555;letter-spacing:-0.141px;">Redaktor</span>
<span style="left:1018.30px;top:117.00px;font-size:8.4px;color:#555;">U</span>
<span style="left:972.00px;top:15.00px;font-size:6.5px;color:#f1d9cf;letter-spacing:0.347px;">ŁP</span>
<span style="left:508.06px;top:133.00px;font-size:8.1px;color:#585858;letter-spacing:-0.316px;">2</span>
<span style="left:540.64px;top:133.00px;font-size:8.1px;color:#585858;letter-spacing:-0.316px;">3</span>
<span style="left:573.22px;top:133.00px;font-size:8.1px;color:#585858;letter-spacing:-0.316px;">4</span>
<span style="left:605.80px;top:133.00px;font-size:8.1px;color:#585858;letter-spacing:-0.316px;">5</span>
<span style="left:638.38px;top:133.00px;font-size:8.1px;color:#585858;letter-spacing:-0.316px;">6</span>
<span style="left:670.96px;top:133.00px;font-size:8.1px;color:#585858;letter-spacing:-0.316px;">7</span>
<span style="left:703.54px;top:133.00px;font-size:8.1px;color:#585858;letter-spacing:-0.316px;">8</span>
<span style="left:736.12px;top:133.00px;font-size:8.1px;color:#585858;letter-spacing:-0.316px;">9</span>
<span style="left:766.80px;top:133.00px;font-size:8.1px;color:#585858;letter-spacing:-1.016px;">10</span>
<span style="left:799.38px;top:133.00px;font-size:8.1px;color:#585858;letter-spacing:-0.406px;">11</span>
<span style="left:831.96px;top:133.00px;font-size:8.1px;color:#585858;letter-spacing:-1.016px;">12</span>
<span style="left:864.54px;top:133.00px;font-size:8.1px;color:#585858;letter-spacing:-1.016px;">13</span>
<span style="left:897.12px;top:133.00px;font-size:8.1px;color:#585858;letter-spacing:-1.016px;">14</span>
<span style="left:929.70px;top:133.00px;font-size:8.1px;color:#585858;letter-spacing:-1.016px;">15</span>
<span style="left:962.28px;top:133.00px;font-size:8.1px;color:#585858;letter-spacing:-1.016px;">16</span>
<span style="left:994.86px;top:133.00px;font-size:8.1px;color:#585858;letter-spacing:-1.016px;">17</span>
<span style="left:410.32px;top:133.00px;font-size:8.1px;color:#585858;letter-spacing:-0.316px;">1</span>
<span style="left:317.69px;top:218.00px;font-size:8.3px;color:#555;letter-spacing:0px;transform:rotate(-90deg);transform-origin:50% 50%;">1</span>
<span style="left:317.69px;top:250.00px;font-size:8.3px;color:#555;letter-spacing:0px;transform:rotate(-90deg);transform-origin:50% 50%;">2</span>
<span style="left:317.69px;top:283.00px;font-size:8.3px;color:#555;letter-spacing:0px;transform:rotate(-90deg);transform-origin:50% 50%;">3</span>
<span style="left:317.69px;top:315.00px;font-size:8.3px;color:#555;letter-spacing:0px;transform:rotate(-90deg);transform-origin:50% 50%;">4</span>
<span style="left:317.69px;top:348.00px;font-size:8.3px;color:#555;letter-spacing:0px;transform:rotate(-90deg);transform-origin:50% 50%;">5</span>
<span style="left:317.69px;top:380.00px;font-size:8.3px;color:#555;letter-spacing:0px;transform:rotate(-90deg);transform-origin:50% 50%;">6</span>
<span style="left:317.69px;top:413.00px;font-size:8.3px;color:#555;letter-spacing:0px;transform:rotate(-90deg);transform-origin:50% 50%;">7</span>
<span style="left:317.69px;top:445.00px;font-size:8.3px;color:#555;letter-spacing:0px;transform:rotate(-90deg);transform-origin:50% 50%;">8</span>
<span style="left:317.69px;top:478.00px;font-size:8.3px;color:#555;letter-spacing:0px;transform:rotate(-90deg);transform-origin:50% 50%;">9</span>
<span style="left:315.89px;top:510.00px;font-size:8.3px;color:#555;letter-spacing:-0.5px;transform:rotate(-90deg);transform-origin:50% 50%;">10</span>
<span style="left:315.89px;top:543.00px;font-size:8.3px;color:#555;letter-spacing:-0.5px;transform:rotate(-90deg);transform-origin:50% 50%;">11</span>
<span style="left:315.89px;top:575.00px;font-size:8.3px;color:#555;letter-spacing:-0.5px;transform:rotate(-90deg);transform-origin:50% 50%;">12</span>
<span style="left:315.89px;top:608.00px;font-size:8.3px;color:#555;letter-spacing:-0.5px;transform:rotate(-90deg);transform-origin:50% 50%;">13</span>
<span style="left:315.89px;top:640.00px;font-size:8.3px;color:#555;letter-spacing:-0.5px;transform:rotate(-90deg);transform-origin:50% 50%;">14</span>
<span style="left:315.89px;top:673.00px;font-size:8.3px;color:#555;letter-spacing:-0.5px;transform:rotate(-90deg);transform-origin:50% 50%;">15</span>
<span style="left:315.89px;top:705.00px;font-size:8.3px;color:#555;letter-spacing:-0.5px;transform:rotate(-90deg);transform-origin:50% 50%;">16</span>
<span style="left:315.89px;top:738.00px;font-size:8.3px;color:#555;letter-spacing:-0.5px;transform:rotate(-90deg);transform-origin:50% 50%;">17</span>
<span style="left:317.69px;top:153.00px;font-size:8.3px;color:#555;letter-spacing:0px;transform:rotate(-90deg);transform-origin:50% 50%;">1</span>
</div></body></html>
